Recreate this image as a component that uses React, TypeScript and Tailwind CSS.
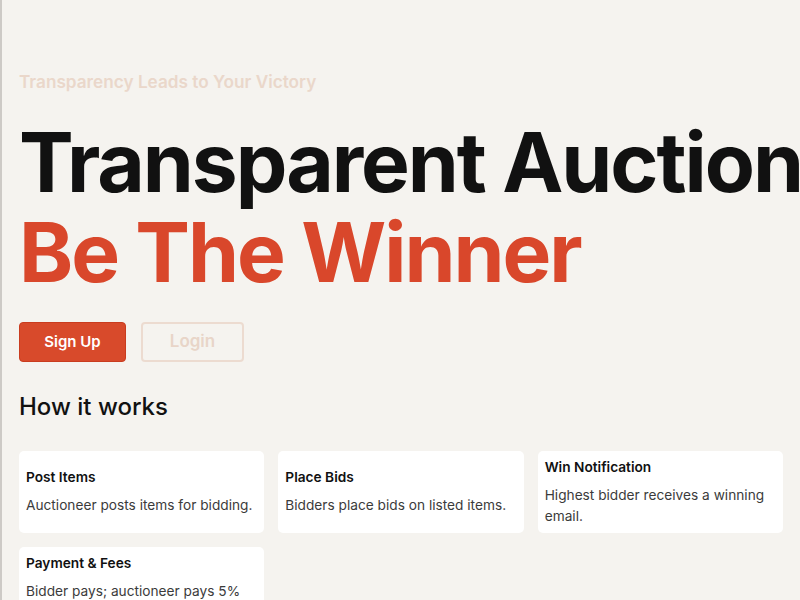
import React from "react";

const steps = [
  { title: "Post Items", text: "Auctioneer posts items for bidding." },
  { title: "Place Bids", text: "Bidders place bids on listed items." },
  { title: "Win Notification", text: "Highest bidder receives a winning email." },
  { title: "Payment & Fees", text: "Bidder pays; auctioneer pays 5% commission fee." },
];

export default function App() {
  return (
    <div className="h-[600px] w-[800px] overflow-hidden border-l-2 border-[#cdcac6] bg-[#f5f3ef] font-['Inter',sans-serif]">
      <div className="px-[17px] pt-[69px]">
        <p className="text-[17.2px] font-semibold text-[#ead7ca]">
          Transparency Leads to Your Victory
        </p>

        <h1 className="mt-[23px] whitespace-nowrap text-[82px] font-bold leading-[90px] tracking-[-0.025em]">
          <span className="block text-[#111111]">Transparent Auction</span>
          <span className="block text-[#d9472b]">Be The Winner</span>
        </h1>

        <div className="mt-[24px] flex gap-[15px]">
          <button
            type="button"
            className="h-[40px] w-[107px] rounded-[4px] border border-[#c93c1f] bg-[#d84a2b] text-[15px] font-semibold text-white"
          >
            Sign Up
          </button>
          <button
            type="button"
            className="h-[40px] w-[103px] rounded-[4px] border-2 border-[#ecdbd0] text-[17px] font-semibold text-[#e8d5c8]"
          >
            Login
          </button>
        </div>

        <h2 className="mt-[27px] text-[24px] font-medium text-[#111111]">How it works</h2>

        <div className="mt-[26px] grid w-[764px] grid-cols-3 gap-[14px]">
          {steps.map((s) => (
            <div
              key={s.title}
              className="flex h-[82px] flex-col justify-center rounded-[5px] bg-white px-[7px]"
            >
              <p className="text-[13.7px] font-semibold leading-[20px] text-[#111111]">{s.title}</p>
              <p className="mt-[8px] text-[13.7px] leading-[21px] text-[#3b3b3b]">{s.text}</p>
            </div>
          ))}
        </div>
      </div>
    </div>
  );
}
